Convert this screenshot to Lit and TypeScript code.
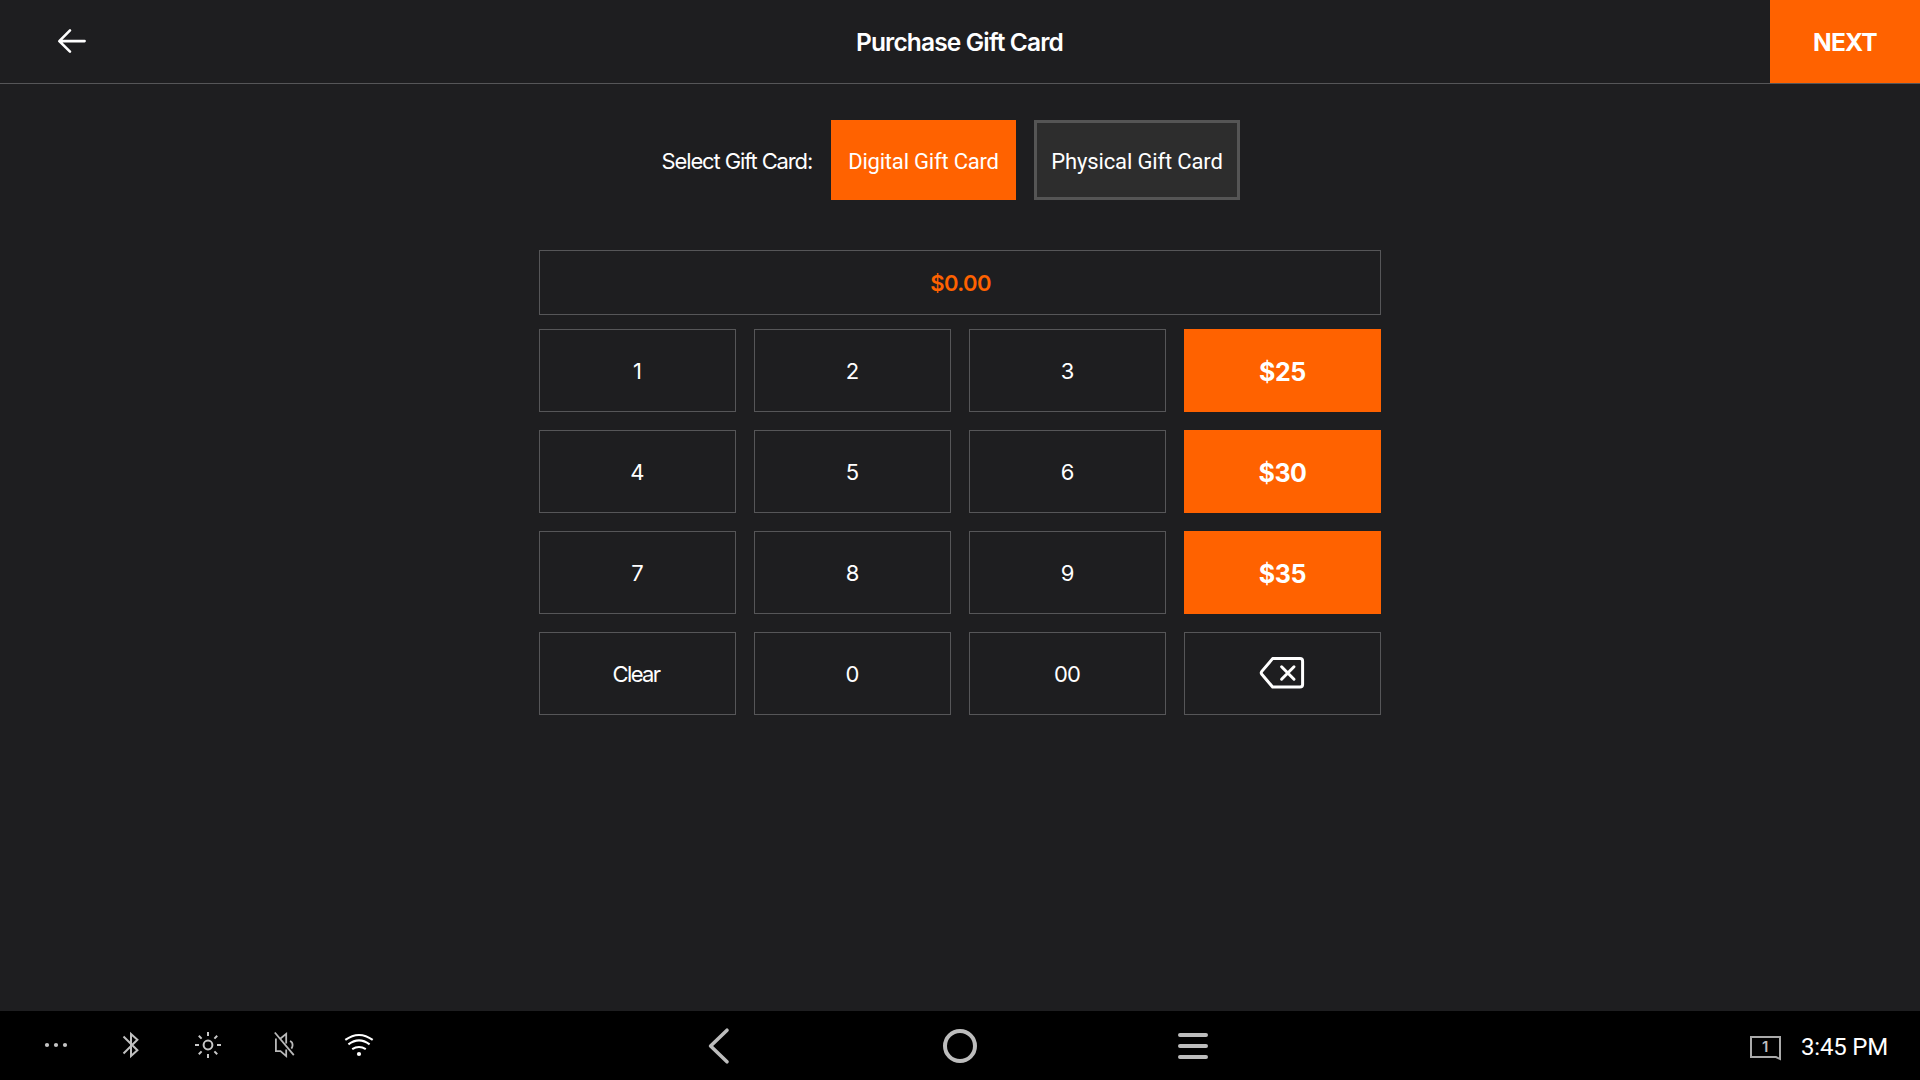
import { LitElement, html, css, svg } from "lit";
import { customElement, state } from "lit/decorators.js";
import { classMap } from "lit/directives/class-map.js";

const backspace = svg`<svg class="icon backspace" width="46" height="34" viewBox="0 0 46 34" fill="none" stroke="#fff" stroke-linecap="round" stroke-linejoin="round">
  <path stroke-width="3" d="M13.6 2.6H41q2.6 0 2.6 2.6V28.4q0 2.6-2.6 2.6H13.6L2.8 18.2q-1.1-1.4 0-2.8z"/>
  <path stroke-width="3" d="M22.6 10.8 35 23.2M35 10.8 22.6 23.2"/>
</svg>`;

@customElement("app-root")
export class AppRoot extends LitElement {
  static styles = css`
    :host { display: block; }
    * { box-sizing: border-box; }
    .screen {
      width: 1920px; height: 1080px; display: flex; flex-direction: column;
      background: #1e1e20; color: #fff; font-family: Inter, "Liberation Sans", sans-serif; overflow: hidden;
    }
    button { font: inherit; color: inherit; border: 0; padding: 0; margin: 0; background: none; border-radius: 0; }
    svg { display: block; overflow: visible; }
    .header {
      height: 84px; flex: none; display: grid; grid-template-columns: 150px 1fr 150px;
      border-bottom: 1px solid #565658;
    }
    .back { display: flex; align-items: center; padding: 0 0 1px 57px; }
    .title { display: flex; align-items: center; justify-content: center; font-size: 24.5px; font-weight: 600; letter-spacing: -0.84px; padding: 0 1px 0 0; }
    .next { background: #ff6200; display: flex; align-items: center; justify-content: center; font-size: 24.5px; font-weight: 700; letter-spacing: -0.8px; padding-top: 0; }
    .content { flex: 1; display: flex; flex-direction: column; align-items: center; padding-top: 36px; }
    .types { display: flex; align-items: center; height: 80px; width: 579px; margin-right: 19px; }
    .label { width: 170px; font-size: 22px; letter-spacing: -1.12px; white-space: nowrap; padding: 1px 0 0 0.5px; }
    .type { height: 80px; font-family: Roboto, sans-serif; font-size: 22px; padding-top: 2px; white-space: nowrap; background: #2d2d2d; border: 3px solid #555; color: #fff; }
    .type.selected { background: #ff6200; border-color: #ff6200; }
    .digital { width: 185px; margin-right: 18px; letter-spacing: -0.2px; }
    .physical { width: 206px; letter-spacing: -0.14px; }
    .amount {
      width: 842px; height: 65px; margin-top: 50px; border: 1px solid #565658; color: #ff6200;
      display: flex; align-items: center; justify-content: center; font-size: 22px; font-weight: 600; letter-spacing: -0.6px; padding: 1px 0 0 1px;
    }
    .pad { display: grid; grid-template-columns: repeat(4, 197px); grid-auto-rows: 83px; gap: 18px; margin-top: 14px; }
    .key { border: 1px solid #565658; display: flex; align-items: center; justify-content: center; font-size: 22px; letter-spacing: -0.9px; padding: 0 1px 0 0; }
    .key.word { letter-spacing: -1.6px; padding-right: 3px; }
    .key.preset { background: #ff6200; border-color: #ff6200; font-size: 25px; font-weight: 700; letter-spacing: -0.4px; padding: 2px 0 0; }
    .key.erase { padding: 0 2px 1px 0; }
    .system {
      height: 69px; flex: none; background: #000; display: grid; grid-template-columns: 1fr auto 1fr; align-items: center;
    }
    .status { display: flex; align-items: center; padding: 0 0 2px 36px; gap: 36px; }
    .nav { display: flex; align-items: center; gap: 197px; }
    .clock { display: flex; align-items: center; justify-content: flex-end; gap: 19px; padding-right: 32px; font-family: Roboto, sans-serif; font-size: 24px; letter-spacing: -0.2px; }
    .display { margin-top: 5px; }
    .time { padding-top: 3px; }
    .count { font-family: Inter, sans-serif; font-size: 15px; font-weight: 600; fill: #bdbdbd; text-anchor: middle; }
  `;

  @state() private selected = "digital";

  private key(label: string, preset = false) {
    return html`<button class=${classMap({ key: true, preset, word: label === "Clear" })}>${label}</button>`;
  }

  private type(id: string, label: string) {
    return html`<button
      class=${classMap({ type: true, [id]: true, selected: this.selected === id })}
      @click=${() => (this.selected = id)}
    >${label}</button>`;
  }

  render() {
    return html`
      <div class="screen">
        <header class="header">
          <button class="back" aria-label="Back">
            <svg width="30" height="26" viewBox="0 0 30 26" fill="none" stroke="#fff" stroke-width="2.6" stroke-linecap="round" stroke-linejoin="round">
              <path d="M27.6 13.1H2.6M13 2.3 2.3 13.1 13 23.7" />
            </svg>
          </button>
          <div class="title"><span>Purchase Gift Card</span></div>
          <button class="next"><span>NEXT</span></button>
        </header>
        <main class="content">
          <div class="types">
            <span class="label">Select Gift Card:</span>
            ${this.type("digital", "Digital Gift Card")}
            ${this.type("physical", "Physical Gift Card")}
          </div>
          <div class="amount"><span>$0.00</span></div>
          <div class="pad">
            ${["1", "2", "3"].map((k) => this.key(k))}${this.key("$25", true)}
            ${["4", "5", "6"].map((k) => this.key(k))}${this.key("$30", true)}
            ${["7", "8", "9"].map((k) => this.key(k))}${this.key("$35", true)}
            ${["Clear", "0", "00"].map((k) => this.key(k))}
            <button class="key erase" aria-label="Backspace">${backspace}</button>
          </div>
        </main>
        <footer class="system">
          <div class="status">
            <svg width="40" height="40" viewBox="36 1025 40 40" fill="#c4c4c4">
              <circle cx="47" cy="1045" r="2.1" /><circle cx="56" cy="1045" r="2.1" /><circle cx="65" cy="1045" r="2.1" />
            </svg>
            <svg width="40" height="40" viewBox="112 1025 40 40" fill="none" stroke="#c0c0c0" stroke-width="2">
              <path d="M123.5 1036.5 137.4 1050.2 131 1056V1034l6.4 5.8L123.5 1053.5" />
            </svg>
            <svg width="40" height="40" viewBox="188 1025 40 40" fill="none" stroke="#c8c8c8" stroke-width="2">
              <circle cx="208" cy="1045" r="4.4" />
              <path d="M208 1032v4M208 1054v4M195 1045h4M217 1045h4M198.8 1035.8l2.8 2.8M214.4 1051.4l2.8 2.8M217.2 1035.8l-2.8 2.8M201.6 1051.4l-2.8 2.8" />
            </svg>
            <svg width="40" height="40" viewBox="264 1025 40 40" fill="none" stroke="#b8b8b8" stroke-width="1.8">
              <path d="M274.8 1032.5 293.8 1055.2M275.9 1038.5v12.6h4.6l5.7 5V1049.5M280.5 1038.5l5.7-4.6v9.5M290 1041q2.6 1 2.6 4 0 2-1.2 3.6" />
            </svg>
            <svg width="40" height="40" viewBox="340 1025 40 40" fill="none" stroke="#fff" stroke-width="2.1">
              <path d="M345.3 1039.9Q359 1030 372.7 1039.9M348.4 1044.4Q359 1036.4 369.6 1044.4M352.2 1049.2Q359 1044.8 365.8 1049.2" />
              <circle cx="359" cy="1054" r="2.1" fill="#fff" stroke="none" />
            </svg>
          </div>
          <div class="nav">
            <svg width="36" height="40" viewBox="709 1026 36 40" fill="none" stroke="#bdbdbd" stroke-width="3.6" stroke-linecap="round" stroke-linejoin="round">
              <path d="M727 1030.2 710.6 1046 727 1061.8" />
            </svg>
            <svg width="36" height="40" viewBox="942 1026 36 40" fill="none" stroke="#bdbdbd" stroke-width="4">
              <circle cx="960" cy="1046" r="15" />
            </svg>
            <svg width="36" height="40" viewBox="1175 1026 36 40" fill="none" stroke="#bdbdbd" stroke-width="4" stroke-linecap="round">
              <path d="M1180 1035h26M1180 1046h26M1180 1057h26" />
            </svg>
          </div>
          <div class="clock">
            <svg class="display" width="32" height="26" viewBox="1750 1036 32 26" fill="none" stroke="#aaa" stroke-width="2">
              <path d="M1751 1038h29v22l-4-2h-25z" />
              <text class="count" x="1765" y="1053" stroke="none">1</text>
            </svg>
            <span class="time">3:45 PM</span>
          </div>
        </footer>
      </div>
    `;
  }
}
